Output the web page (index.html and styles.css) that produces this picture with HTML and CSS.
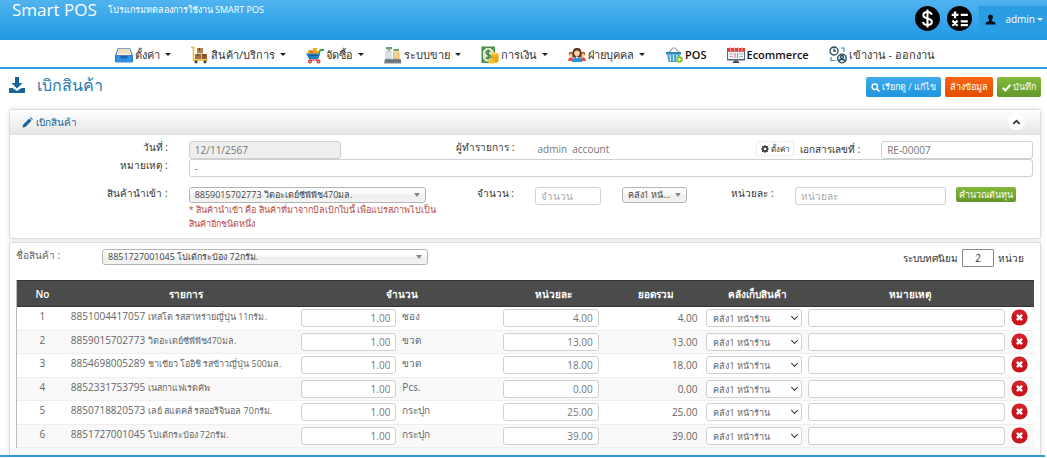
FILE: index.html
```html
<!DOCTYPE html>
<html lang="th">
<head>
<meta charset="utf-8">
<title>Smart POS</title>
<link rel="stylesheet" href="styles.css">
</head>
<body>
<svg class="sprite" aria-hidden="true">
  <symbol id="cross" viewBox="0 0 18 18"><circle cx="9" cy="9" r="8.6" fill="#c9151e"/><path d="M1.5 6a8 8 0 0 1 15 0z" fill="#e0303a" opacity=".5"/><path d="M6.3 6.3l5.4 5.4M11.7 6.3l-5.4 5.4" stroke="#fff" stroke-width="2.6"/></symbol>
</svg>
<header class="topbar">
  <div class="brand"><span class="brand-name">Smart POS</span><span class="brand-sub">โปรแกรมทดลองการใช้งาน SMART POS</span></div>
  <div class="top-actions">
    <button class="round" aria-label="อัตราแลกเปลี่ยน"><svg viewBox="0 0 24 24"><circle cx="12" cy="12" r="12"/><path d="M16 8.4c-.4-1.800-2-2.600-4-2.600-2.300 0-4 1.100-4 3 0 4.200 8.200 2 8.200 6.300 0 2-1.800 3.100-4.200 3.100-2.300 0-4-1-4.300-3M12 3.300v17.400" fill="none" stroke="#fff" stroke-width="2"/></svg></button>
    <button class="round" aria-label="เครื่องคิดเลข"><svg viewBox="0 0 24 24"><circle cx="12" cy="12" r="12"/><path d="M4.500 8.500h6.500M7.700 5.200v6.500M13.200 8.500h6.800M5.200 14l5 5M10.200 14l-5 5M13.200 14.800h6.800M13.200 18.400h6.800" fill="none" stroke="#fff" stroke-width="2.200"/></svg></button>
    <button class="user"><svg viewBox="0 0 12 12"><path d="M6 .5c1.700 0 2.700 1.200 2.700 2.900 0 1.300-.5 2.300-1.200 3v1.200c1.200.7 3.400 1 3.900 2.300V11.500H.6V9.900c.5-1.300 2.700-1.600 3.900-2.300V6.400c-.7-.7-1.200-1.700-1.200-3C3.300 1.700 4.300.5 6 .5z" fill="#06131d"/></svg><span>admin</span><i class="caret light"></i></button>
  </div>
</header>
<nav class="menu">
  <a href="#"><svg viewBox="0 0 18 18"><path d="M3 2h12l3 8v6H0v-6z" fill="#1b66b5"/><path d="M3.500 2.500h11l2.200 6.800H1.300z" fill="#f4ead0"/><path d="M3 4h12M2.400 6h13.200" stroke="#d9c9a0" stroke-width=".7"/><path d="M.5 10H5l1.300 2.500h5.400L13 10h4.500v6.500H.5z" fill="#2f8fe0"/></svg><span>ตั้งค่า</span><i class="caret"></i></a>
  <a href="#"><svg viewBox="0 0 18 18"><path d="M0 1.500h2.500V14H17" fill="none" stroke="#f0b72c" stroke-width="1.600"/><path d="M4 8h6v5H4z" fill="#a8703f"/><path d="M10.500 8H16v5h-5.500z" fill="#8e5a31"/><path d="M6 2h6v5.500H6z" fill="#b98150"/><path d="M8.500 2v2.500M7 8v2M13 8v2" stroke="#5e3a1d"/><circle cx="5" cy="15.800" r="1.600" fill="#444"/><circle cx="14" cy="15.800" r="1.600" fill="#444"/></svg><span>สินค้า/บริการ</span><i class="caret"></i></a>
  <a href="#"><svg viewBox="0 0 18 18"><path d="M2 4h5V2h4v3h3v3H2z" fill="#f5a623"/><path d="M4 5h3v2H4z" fill="#d9771c"/><path d="M13 6.500l1.500-2.500H18" fill="none" stroke="#37a35a" stroke-width="1.800"/><path d="M0 7.500h14.500L12 13H3z" fill="#1f7fc0"/><path d="M3 9.500h9" stroke="#135a91"/><path d="M3 14h10" stroke="#d93636" stroke-width="1.200"/><circle cx="4" cy="15.600" r="2" fill="#e0342e"/><circle cx="12.500" cy="15.600" r="2" fill="#e0342e"/><circle cx="4" cy="15.600" r=".7" fill="#fff"/><circle cx="12.500" cy="15.600" r=".7" fill="#fff"/></svg><span>จัดซื้อ</span><i class="caret"></i></a>
  <a href="#"><svg viewBox="0 0 18 18"><path d="M2 1h6v2.500H2zM9.500 3H15v2H9.500z" fill="#64a56c"/><path d="M4 3.500h2V13H4z" fill="#9ba5ab"/><path d="M1.500 5h6v8h-6z" fill="#c7ced2"/><path d="M9 5.500h6.500V13H9z" fill="#e8b65a"/><path d="M10 7h4.500M10 9h4.500M10 11h4.500M2.500 7h4M2.500 9h4M2.500 11h4" stroke="#fff" stroke-width=".8"/><path d="M1 13h15.500l1 4.500H0z" fill="#7c878e"/><path d="M1 15h16" stroke="#4d575e" stroke-width=".8"/></svg><span>ระบบขาย</span><i class="caret"></i></a>
  <a href="#"><svg viewBox="0 0 18 18"><path d="M.5.5H14V17H.5z" fill="#4d8d4b"/><path d="M2 2h10.500v13.500H2z" fill="#dcebd0"/><path d="M2 2h3L2 5zM2 12.500l3 3H2zM9.500 2h3v3z" fill="#4d8d4b"/><path d="M9.500 5.500C8.500 4.500 5 4.700 5 6.700c0 2 4.500 1.500 4.500 3.600S6 12.800 4.800 11.500M7.200 3.500v10" fill="none" stroke="#3d7a3b" stroke-width="1.300"/><ellipse cx="13.700" cy="8" rx="3.800" ry="1.800" fill="#ffd34d"/><path d="M10 8.500h7.500v7.300c-1.500 1.700-6 1.700-7.500 0z" fill="#f2b01e"/><path d="M7.500 12.500h6.500v4c-1.500 1.300-5 1.300-6.500 0z" fill="#f8c02f"/><path d="M10 11c2 1.200 5.500 1.200 7.500 0M12 14c2 .8 4 .5 5.500-.3" fill="none" stroke="#ce8a10" stroke-width=".8"/></svg><span>การเงิน</span><i class="caret"></i></a>
  <a href="#"><svg viewBox="0 0 18 18"><circle cx="3" cy="8" r="2.300" fill="#b3572d"/><circle cx="15" cy="8" r="2.300" fill="#b3572d"/><circle cx="3" cy="9.200" r="1.700" fill="#f9c9a0"/><circle cx="15" cy="9.200" r="1.700" fill="#f9c9a0"/><path d="M0 15c0-5 6-5 6 0zM12 15c0-5 6-5 6 0z" fill="#e8504a"/><path d="M4.500 11.500C4 2 6.500 2 9 2s5 0 4.500 9.500z" fill="#5f3427"/><circle cx="9" cy="7.300" r="2.800" fill="#fbd0a8"/><path d="M4 16c0-6.500 10-6.500 10 0z" fill="#2396d8"/><path d="M7.800 10.500h2.400L9 13z" fill="#fff"/></svg><span>ฝ่ายบุคคล</span><i class="caret"></i></a>
  <a href="#" class="strong"><svg viewBox="0 0 18 18"><path d="M3 7l5-5h2l5 5" fill="none" stroke="#9aa5ad" stroke-width="1.200"/><path d="M1 6h15v2.500H1z" fill="#2f87b8"/><path d="M2 8.500h13L13.500 16h-10z" fill="#4ba4d0"/><path d="M5 9l.5 6M8.500 9v6M12 9l-.5 6" stroke="#e6f4fb"/><circle cx="14.500" cy="13.500" r="3.200" fill="#7fc41c"/><path d="M14.500 11.700v3.600M12.700 13.500h3.600" stroke="#fff" stroke-width="1.200"/></svg><span>POS</span></a>
  <a href="#" class="strong"><svg viewBox="0 0 18 18"><path d="M0 2h18v12.500H0z" fill="#596779"/><path d="M1 5.500h16v7.500H1z" fill="#eef1f5"/><path d="M0 2h18v3.500H0z" fill="#e53e38"/><path d="M3.500 1v4M7.500 1v4M11.500 1v4M15 1v4" stroke="#f6a29d"/><path d="M2.500 8H6M2.500 10.500H6M12.500 8H16M12.500 10.500H16" stroke="#a6afbb"/><path d="M8 7v5M10.500 7v5" stroke="#e87770"/><path d="M7 14.500h4l1.500 2.500h-7z" fill="#46505e"/></svg><span>Ecommerce</span></a>
  <a href="#"><svg viewBox="0 0 18 18"><g fill="none" stroke="#27485a" stroke-width="1.300"><circle cx="5" cy="5" r="4"/><path d="M5 2.500V5h2"/><circle cx="13" cy="12.500" r="4.300" fill="#cfe9f5"/><circle cx="13" cy="11" r="1.500"/><path d="M10 15.500c.5-3 5.500-3 6 0"/><path d="M2 11v3.500h4.500M12 2h3v4" stroke="#4b8daa" stroke-width="1.200"/></g></svg><span>เข้างาน - ออกงาน</span></a>
</nav>
<main class="page">
  <div class="title-row">
    <h1><svg viewBox="0 0 16 16"><path d="M6 0h4v6h3.500L8 11.500 2.500 6H6z"/><path d="M0 11h3.500L8 14l4.500-3H16v5H0z"/></svg><span>เบิกสินค้า</span></h1>
    <div class="buttons">
      <button class="btn blue"><svg viewBox="0 0 10 10"><circle cx="4.200" cy="4.200" r="3" fill="none" stroke="#fff" stroke-width="1.600"/><path d="M6.500 6.500L9.300 9.300" stroke="#fff" stroke-width="1.900"/></svg>เรียกดู / แก้ไข</button>
      <button class="btn orange">ล้างข้อมูล</button>
      <button class="btn green"><svg viewBox="0 0 10 10"><path d="M.8 5.300l2.900 2.900L9.300 2" fill="none" stroke="#fff" stroke-width="2.300"/></svg>บันทึก</button>
    </div>
  </div>

  <section class="panel">
    <div class="panel-head">
      <h2><svg viewBox="0 0 11 11"><path d="M7.300 1.500L9.500 3.700 3.300 9.900.5 10.500l.6-2.800zM8 .8l.8-.6 2 2-.7.8z" fill="#17639a"/></svg>เบิกสินค้า</h2>
      <button class="collapse" aria-label="ย่อ"><svg viewBox="0 0 10 8"><path d="M1.500 6L5 2.500 8.500 6" fill="none" stroke="#333" stroke-width="2"/></svg></button>
    </div>
    <form class="form">
      <div class="row row-doc">
        <label for="date">วันที่ :</label><input id="date" value="12/11/2567" disabled>
        <span class="label">ผู้ทำรายการ :</span><span class="value">admin&nbsp; account</span>
        <div class="docno"><button type="button" class="mini"><svg viewBox="0 0 10 10"><circle cx="5" cy="5" r="2.700" fill="none" stroke="#333" stroke-width="2"/><path d="M5 0v10M0 5h10M1.500 1.500l1.600 1.600M8.500 1.500L6.900 3.100M1.500 8.500l1.600-1.600M8.500 8.500L6.900 6.900" stroke="#333" stroke-width="1.400"/><circle cx="5" cy="5" r="1.700" fill="#fff"/></svg>ตั้งค่า</button><label for="doc">เอกสารเลขที่ :</label></div><input id="doc" value="RE-00007">
      </div>
      <div class="row row-note">
        <label for="note">หมายเหตุ :</label><input id="note" value="-">
      </div>
      <div class="row row-item">
        <label for="item">สินค้านำเข้า :</label>
        <div class="source"><span class="pick"><select id="item"><option>8859015702773 วิตอะเดย์ซีพีพีช470มล.</option></select></span><p class="hint">* สินค้านำเข้า คือ สินค้าที่มาจากบิลเบิกใบนี้ เพื่อแปรสภาพไปเป็น<br>สินค้าอีกชนิดหนึ่ง</p></div>
        <label for="qty">จำนวน :</label><input id="qty" placeholder="จำนวน">
        <span class="pick"><select aria-label="คลัง"><option>คลัง1 หน้...</option></select></span>
        <label for="unit">หน่วยละ :</label>
        <div class="unit"><input id="unit" placeholder="หน่วยละ"><button type="button" class="btn green small">คำนวณต้นทุน</button></div>
      </div>
    </form>
  </section>

  <section class="panel lines">
    <div class="line-head">
      <label for="product">ชื่อสินค้า :</label>
      <span class="pick product"><select id="product"><option>8851727001045 โปเต้กระป๋อง 72กรัม.</option></select></span>
      <div class="decimals"><label for="dec">ระบบทศนิยม</label><input id="dec" value="2"><span>หน่วย</span></div>
    </div>
    <table>
      <colgroup><col class="c-no"><col class="c-name"><col class="c-qty"><col class="c-uom"><col class="c-price"><col class="c-total"><col class="c-store"><col class="c-note"><col class="c-del"></colgroup>
      <thead><tr><th>No</th><th>รายการ</th><th colspan="2">จำนวน</th><th>หน่วยละ</th><th>ยอดรวม</th><th>คลังเก็บสินค้า</th><th>หมายเหตุ</th><th></th></tr></thead>
      <tbody>
        <tr><td class="no">1</td><td class="name"><span class="code">8851004417057</span> เทสโต รสสาหร่ายญี่ปุ่น 11กรัม.</td><td><input class="num" value="1.00" aria-label="จำนวน"></td><td class="uom">ซอง</td><td><input class="num" value="4.00" aria-label="หน่วยละ"></td><td class="sum">4.00</td><td><span class="store"><select aria-label="คลัง"><option>คลัง1 หน้าร้าน</option></select></span></td><td><input aria-label="หมายเหตุ"></td><td><button class="del" aria-label="ลบ"><svg><use href="#cross"/></svg></button></td></tr>
        <tr><td class="no">2</td><td class="name"><span class="code">8859015702773</span> วิตอะเดย์ซีพีพีช470มล.</td><td><input class="num" value="1.00" aria-label="จำนวน"></td><td class="uom">ขวด</td><td><input class="num" value="13.00" aria-label="หน่วยละ"></td><td class="sum">13.00</td><td><span class="store"><select aria-label="คลัง"><option>คลัง1 หน้าร้าน</option></select></span></td><td><input aria-label="หมายเหตุ"></td><td><button class="del" aria-label="ลบ"><svg><use href="#cross"/></svg></button></td></tr>
        <tr><td class="no">3</td><td class="name"><span class="code">8854698005289</span> ชาเขียว โออิชิ รสข้าวญี่ปุ่น 500มล.</td><td><input class="num" value="1.00" aria-label="จำนวน"></td><td class="uom">ขวด</td><td><input class="num" value="18.00" aria-label="หน่วยละ"></td><td class="sum">18.00</td><td><span class="store"><select aria-label="คลัง"><option>คลัง1 หน้าร้าน</option></select></span></td><td><input aria-label="หมายเหตุ"></td><td><button class="del" aria-label="ลบ"><svg><use href="#cross"/></svg></button></td></tr>
        <tr><td class="no">4</td><td class="name"><span class="code">8852331753795</span> เนสกาแฟเรดคัพ</td><td><input class="num" value="1.00" aria-label="จำนวน"></td><td class="uom">Pcs.</td><td><input class="num" value="0.00" aria-label="หน่วยละ"></td><td class="sum">0.00</td><td><span class="store"><select aria-label="คลัง"><option>คลัง1 หน้าร้าน</option></select></span></td><td><input aria-label="หมายเหตุ"></td><td><button class="del" aria-label="ลบ"><svg><use href="#cross"/></svg></button></td></tr>
        <tr><td class="no">5</td><td class="name"><span class="code">8850718820573</span> เลย์ สแตคส์ รสออริจินอล 70กรัม.</td><td><input class="num" value="1.00" aria-label="จำนวน"></td><td class="uom">กระปุก</td><td><input class="num" value="25.00" aria-label="หน่วยละ"></td><td class="sum">25.00</td><td><span class="store"><select aria-label="คลัง"><option>คลัง1 หน้าร้าน</option></select></span></td><td><input aria-label="หมายเหตุ"></td><td><button class="del" aria-label="ลบ"><svg><use href="#cross"/></svg></button></td></tr>
        <tr><td class="no">6</td><td class="name"><span class="code">8851727001045</span> โปเต้กระป๋อง 72กรัม.</td><td><input class="num" value="1.00" aria-label="จำนวน"></td><td class="uom">กระปุก</td><td><input class="num" value="39.00" aria-label="หน่วยละ"></td><td class="sum">39.00</td><td><span class="store"><select aria-label="คลัง"><option>คลัง1 หน้าร้าน</option></select></span></td><td><input aria-label="หมายเหตุ"></td><td><button class="del" aria-label="ลบ"><svg><use href="#cross"/></svg></button></td></tr>
      </tbody>
    </table>
  </section>
</main>
</body>
</html>
```
FILE: styles.css
```css
* { box-sizing: border-box; }
body { margin: 0; background: #fff; color: #666; font: 10px/16px "Open Sans", "Noto Sans", sans-serif; }
input, select, button { font: inherit; color: inherit; margin: 0; }
button { cursor: pointer; border: 0; padding: 0; background: none; white-space: nowrap; }
svg { display: block; flex: none; }
h1, h2, p { margin: 0; font-weight: 400; }
.sprite { position: absolute; width: 0; height: 0; }

.topbar { display: flex; justify-content: space-between; height: 40px; background: linear-gradient(#50b3ee, #1f9ae3); color: #fff; }
.brand { display: flex; gap: 11px; padding-left: 12px; line-height: 20px; white-space: nowrap; }
.brand-name { font-size: 17px; }
.brand-sub { font-size: 9px; }
.top-actions { display: flex; align-items: flex-start; gap: 7px; padding-top: 6px; }
.round svg { width: 25px; height: 25px; }
.user { display: flex; align-items: center; gap: 9px; height: 26px; padding: 0 4px 0 6px; background: #2b9de2; }
.user svg { width: 11px; height: 11px; }
.user .caret { margin-left: -7px; }
.caret { border: 3px solid transparent; border-top-color: #222; border-bottom: 0; }
.caret.light { border-top-color: #fff; }

.menu { display: flex; justify-content: center; gap: 20px; height: 29px; padding: 2px 0 0 3px; border-bottom: 2px solid #2f9fe3; background: #fff; }
.menu a { display: flex; align-items: center; gap: 2px; color: #333; text-decoration: none; font-size: 11px; white-space: nowrap; }
.menu svg { width: 18px; height: 18px; }
.menu .caret { margin-left: 3px; }
.menu .strong { color: #111; font-weight: 600; }

.page { margin-right: 2px; padding: 0 4px 0 9px; border-bottom: 2px solid #2f9fe3; }
.title-row { display: flex; justify-content: space-between; align-items: flex-end; padding: 4px 0 8px; }
h1 { display: flex; align-items: center; gap: 12px; color: #2679b5; font-size: 16px; line-height: 24px; }
h1 svg { width: 16px; height: 16px; fill: #17639a; }
.buttons { display: flex; gap: 4px; }
.btn { display: flex; align-items: center; justify-content: center; gap: 2px; height: 20px; padding: 0 5px; border-radius: 2px; color: #fff; font-size: 9px; }
.btn svg { width: 9px; height: 9px; }
.blue { background: linear-gradient(#41abec, #1f94dd); }
.orange { background: linear-gradient(#fb6514, #e34d02); }
.green { background: linear-gradient(#84b93c, #62972a); }
.small { height: 15px; padding: 0 3px; line-height: 15px; }

.panel { margin-top: 3px; border: 1px solid #ddd; border-radius: 3px; box-shadow: 0 0 5px rgba(0,0,0,.12); background: #fff; }
.title-row + .panel { margin-top: 4px; }
.panel-head { display: flex; justify-content: space-between; align-items: center; height: 25px; padding: 0 15px 0 12px; border-bottom: 1px solid #e0e0e0; background: linear-gradient(#fff, #e6e6e6); }
h2 { display: flex; align-items: center; gap: 3px; color: #17639a; font-size: 10px; }
h2 svg { width: 11px; height: 11px; }
.collapse { padding: 4px; border-radius: 8px; background: #fff; }
.collapse svg { width: 9px; height: 8px; }

.form { display: grid; padding: 6px 7px 7px 0; }
.row { display: grid; column-gap: 21px; align-items: start; }
.row-doc { grid-template-columns: 158fr 152fr 153fr 181fr 123fr 152fr; }
.row-note { grid-template-columns: 158fr 846fr; }
.row-item { grid-template-columns: 158fr 238fr 67fr 66fr 65fr 66fr 239fr; margin-top: 10px; }
.row > label, .label, .docno { text-align: right; color: #333; white-space: nowrap; line-height: 12px; }
.value { padding: 0 2px; color: #777; }
.docno { display: flex; justify-content: flex-end; align-items: center; gap: 6px; }
.mini { display: flex; align-items: center; gap: 2px; height: 15px; padding: 0 4px; border: 1px solid #eee; border-radius: 2px; font-size: 8px; color: #333; }
.mini svg { width: 8px; height: 8px; }
input { display: block; width: 100%; min-width: 0; height: 18px; padding: 0 5px; border: 1px solid #d0d0d0; border-radius: 3px; background: #fff; color: #777; }
input:disabled { background: #eee; }
input::placeholder { color: #aaa; }
.source { min-width: 0; }
.pick { position: relative; display: block; min-width: 0; }
.pick select { display: block; appearance: none; width: 100%; height: 16px; padding: 0 14px 0 5px; border: 1px solid #b4b4b4; border-radius: 3px; background: linear-gradient(#fff 20%, #f6f6f6 50%, #eee 52%, #f4f4f4); color: #444; font-size: 9px; line-height: 14px; }
.pick::after { content: ""; position: absolute; right: 6px; top: 6px; border: 3px solid transparent; border-top: 4px solid #888; border-bottom: 0; }
.hint { color: #b94a48; font-size: 9px; line-height: 14px; white-space: nowrap; }
.unit { display: grid; grid-template-columns: 152fr 77fr; gap: 10px; justify-items: start; }

.lines { padding: 6px 6px 7px; border-bottom: 0; border-radius: 3px 3px 0 0; }
.line-head { display: flex; align-items: flex-start; height: 31px; }
.line-head > label { flex: 0 0 86px; line-height: 12px; }
.product { flex: 0 1 326px; }
.decimals { display: flex; gap: 4px; align-items: center; margin-left: auto; padding-right: 10px; color: #333; white-space: nowrap; }
.decimals input { width: 32px; border-color: #888; border-radius: 1px; text-align: center; color: #333; }
table { width: 100%; height: 168px; table-layout: fixed; border-collapse: separate; border-spacing: 0; border-left: 1px solid #bbb; }
th { height: 27px; padding: 0 0 0 6px; background: #4b4b4b; color: #fff; font-weight: 600; border-top: 1px solid #333; border-bottom: 1px solid #333; }
th:first-child { padding: 0; }
td { padding: 2px 3px; border-bottom: 1px solid #eee; vertical-align: top; line-height: 14px; white-space: nowrap; }
tbody tr:nth-child(even) { background: #f9f9f9; }
.no { text-align: center; }
.name { font-size: 9px; }
.code { font-size: 10px; }
.sum { text-align: right; padding-right: 6px; line-height: 18px; }
.num { text-align: right; }
.c-no { width: 5%; }
.c-name { width: 22.6%; }
.c-qty { width: 10%; }
.c-uom { width: 9.9%; }
.c-price { width: 10%; }
.c-total { width: 10%; }
.c-store { width: 10%; }
.c-note { width: 20%; }
.store { position: relative; display: block; }
.store select { display: block; appearance: none; width: 100%; height: 18px; padding: 2px 6px 0; border: 1px solid #d0d0d0; border-radius: 3px; background: #fff; color: #666; font-size: 9px; }
.store::after { content: ""; position: absolute; right: 5px; top: 5px; width: 4px; height: 4px; border: solid #333; border-width: 0 1px 1px 0; rotate: 45deg; }
.del { display: block; }
.del svg { width: 17px; height: 17px; }
```
